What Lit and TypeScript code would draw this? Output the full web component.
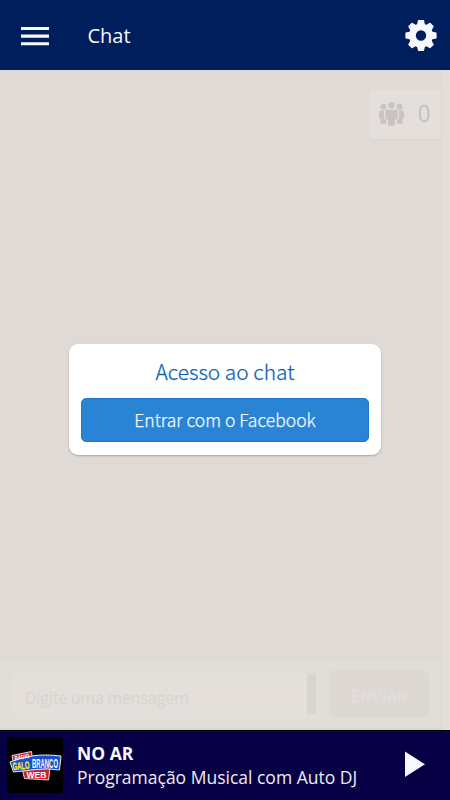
import { LitElement, html, css } from "lit";
import { customElement } from "lit/decorators.js";

@customElement("app-root")
export class AppRoot extends LitElement {
  static styles = css`
    :host {
      display: flex;
      flex-direction: column;
      width: 450px;
      height: 800px;
      overflow: hidden;
      font-family: "Open Sans", "Noto Sans", sans-serif;
    }
    * { box-sizing: border-box; }
    svg { display: block; flex: none; }
    header {
      height: 70px;
      flex: none;
      display: flex;
      align-items: center;
      padding: 2px 13px 0 21px;
      background: #001e5c;
      color: #f8f8ff;
    }
    .title { margin-left: 38.5px; flex: 1; font-size: 20px; line-height: 28px; }
    main {
      position: relative;
      flex: 1;
      display: flex;
      background: #dfdad6;
      font-family: "Noto Sans CJK SC", "Open Sans", sans-serif;
    }
    .chat { flex: 1; display: flex; flex-direction: column; }
    .track { width: 9px; background: #e3deda; border-left: 1px solid #dcd7d3; }
    .history { flex: 1; display: flex; justify-content: flex-end; align-items: flex-start; padding-top: 19px; }
    .users {
      display: flex;
      align-items: center;
      width: 72px;
      height: 50px;
      padding-left: 9px;
      border-radius: 6px 0 0 6px;
      background: #e4dfdb;
      box-shadow: 0 1px 1px #dad5d1;
      color: #c9c4c1;
    }
    .count { margin-left: 13px; padding-bottom: 3px; font-size: 23px; line-height: 47px; font-weight: 300; color: #c2bdba; -webkit-text-stroke: 0.3px currentColor; }
    .compose {
      height: 69px;
      display: flex;
      align-items: flex-start;
      padding: 9px 12px 0;
      background: #e1ddd8;
      border-bottom: 2px solid #d9d5d0;
    }
    .field {
      width: 295px;
      height: 45px;
      margin-top: 3px;
      padding-left: 13px;
      border-radius: 5px 0 0 5px;
      background: #e4dfdb;
      color: #d8d3cf;
      font-size: 16.6px;
      letter-spacing: -0.2px;
      font-weight: 300;
      -webkit-text-stroke: 0.3px currentColor;
      line-height: 49px;
      white-space: nowrap;
    }
    .thumb { width: 9px; height: 41px; margin-top: 3px; background: #d9d4d0; }
    .send {
      width: 100px;
      height: 47px;
      margin-left: 13px;
      border-radius: 5px;
      background: #ddd8d4;
      color: #e2ddd9;
      font-size: 15.7px;
      font-weight: 700;
      line-height: 52px;
      text-align: center;
    }
    .overlay {
      position: absolute;
      inset: 0;
      display: flex;
      justify-content: center;
      align-items: center;
      padding-bottom: 1px;
    }
    .card {
      width: 312px;
      height: 111px;
      padding: 0 12px;
      border-radius: 9px;
      background: #fff;
      box-shadow: 0 1px 2px #aaa5a2;
    }
    .card-title { height: 54px; line-height: 54px; text-align: center; font-size: 20.9px; font-weight: 300; color: #0d5fb6; -webkit-text-stroke: 0.25px currentColor; }
    .login {
      height: 44px;
      border: 1px solid #1c79cd;
      border-radius: 5px;
      background: #2a84d5;
      color: #f4f9ff;
      text-align: center;
      font-size: 17.5px;
      font-weight: 300;
      -webkit-text-stroke: 0.25px currentColor;
      line-height: 42px;
    }
    footer {
      height: 70px;
      flex: none;
      display: flex;
      align-items: center;
      padding: 0 25px 3px 7px;
      border-top: 1px solid #000;
      background: #080044;
      color: #f8f8ff;
    }
    .cover { border-radius: 4px; background: #000; margin-top: 2px; }
    .info { flex: 1; margin-left: 14px; padding-top: 1px; font-size: 17.5px; line-height: 24px; white-space: nowrap; }
    .now { font-weight: 700; }
    .show { color: #ececf2; }
    .art { font-family: "Liberation Sans", sans-serif; font-weight: 700; }
  `;

  render() {
    return html`
      <header>
        <svg width="28" height="19" viewBox="0 0 28 19" fill="currentColor">
          <path d="M0 0h28v3H0zM0 7.5h28v3.3H0zM0 15.3h28v3H0z" />
        </svg>
        <div class="title">Chat</div>
        <svg width="32" height="32" viewBox="0 0 32 32" fill="none" stroke="currentColor">
          <circle cx="16" cy="15.5" r="8.6" stroke-width="6.8" />
          <g fill="currentColor" stroke-width="1.2" stroke-linejoin="round" transform="translate(0 -.5)">
            <path d="M13.5 1h5l1 5h-7zM13.5 31h5l1-5h-7zM1 13.5v5l5 1v-7zM31 13.5v5l-5 1v-7z" />
            <path transform="rotate(45 16 16)" d="M13.8 1h4.4l1.3 5h-7zM13.8 31h4.4l1.3-5h-7zM1 13.8v4.4l5 1.3v-7zM31 13.8v4.4l-5 1.3v-7z" />
          </g>
        </svg>
      </header>
      <main>
        <div class="chat">
          <div class="history">
            <div class="users">
              <svg width="27" height="26" viewBox="0 0 27 26" fill="currentColor">
                <circle cx="5.5" cy="5.8" r="3" />
                <circle cx="21.5" cy="5.8" r="3" />
                <circle cx="13.5" cy="4.3" r="3.2" />
                <path d="M8.7 8.8h9.6q1.4 0 1.4 1.4v7q0 1.2-1.7 1.2l-1 0v5q0 1.3-1.4 1.3h-4.2q-1.4 0-1.4-1.3v-5h-1q-1.7 0-1.7-1.2v-7q0-1.4 1.4-1.4z" />
                <path d="M6 9.5H3Q1 9.5 1 11.3v5.5q0 1.2 1.6 1.2v3.5q0 1.3 1.4 1.3h3.3q.8 0 .8-1v-2.3Q6 19.3 6 17zM21 9.5h3q2 0 2 1.8v5.5q0 1.2-1.6 1.2v3.5q0 1.3-1.4 1.3h-3.3q-.8 0-.8-1v-2.3q2.1-.2 2.1-2.5z" />
              </svg>
              <span class="count">0</span>
            </div>
          </div>
          <div class="compose">
            <div class="field">Digite uma mensagem</div>
            <div class="thumb"></div>
            <div class="send">ENVIAR</div>
          </div>
        </div>
        <div class="track"></div>
        <div class="overlay">
          <div class="card">
            <div class="card-title">Acesso ao chat</div>
            <div class="login">Entrar com o Facebook</div>
          </div>
        </div>
      </main>
      <footer>
        <svg class="cover" width="56" height="56" viewBox="0 0 56 56">
          <path d="M5 18.5l19.5-4 1 8-19 4z" fill="#d31d2b" stroke="#ddd" stroke-width="1" stroke-linejoin="round" />
          <path d="M15.5 33l27.500-2-1.500 12-24-1.500z" fill="#d31d2b" stroke="#ddd" stroke-width="1" stroke-linejoin="round" />
          <path d="M3 25q10-4 22-6t29 0l-1.500 14q-12-2-24-.5T6.500 35z" fill="#1550d0" stroke="#eee" stroke-width="1" stroke-linejoin="round" />
          <g class="art">
            <text transform="translate(8 23.5) rotate(-11)" font-size="6" fill="#fff" textLength="15" lengthAdjust="spacingAndGlyphs">RÁDIO</text>
            <text transform="translate(19.5 40.8)" font-size="8.500" fill="#fff" textLength="20" lengthAdjust="spacingAndGlyphs">WEB</text>
            <text transform="translate(6 33.300) rotate(-6)" font-size="10.500" fill="#ffee19" stroke="#ffee19" stroke-width=".3" textLength="17" lengthAdjust="spacingAndGlyphs">GALO</text>
            <text transform="translate(25 30.500)" font-size="12.500" fill="#fff" textLength="26" lengthAdjust="spacingAndGlyphs">BRANCO</text>
          </g>
        </svg>
        <div class="info">
          <div class="now">NO AR</div>
          <div class="show">Programação Musical com Auto DJ</div>
        </div>
        <svg width="20" height="27" viewBox="0 0 20 27" fill="currentColor">
          <path d="M0 .5L20 13.300 0 26z" />
        </svg>
      </footer>
    `;
  }
}
